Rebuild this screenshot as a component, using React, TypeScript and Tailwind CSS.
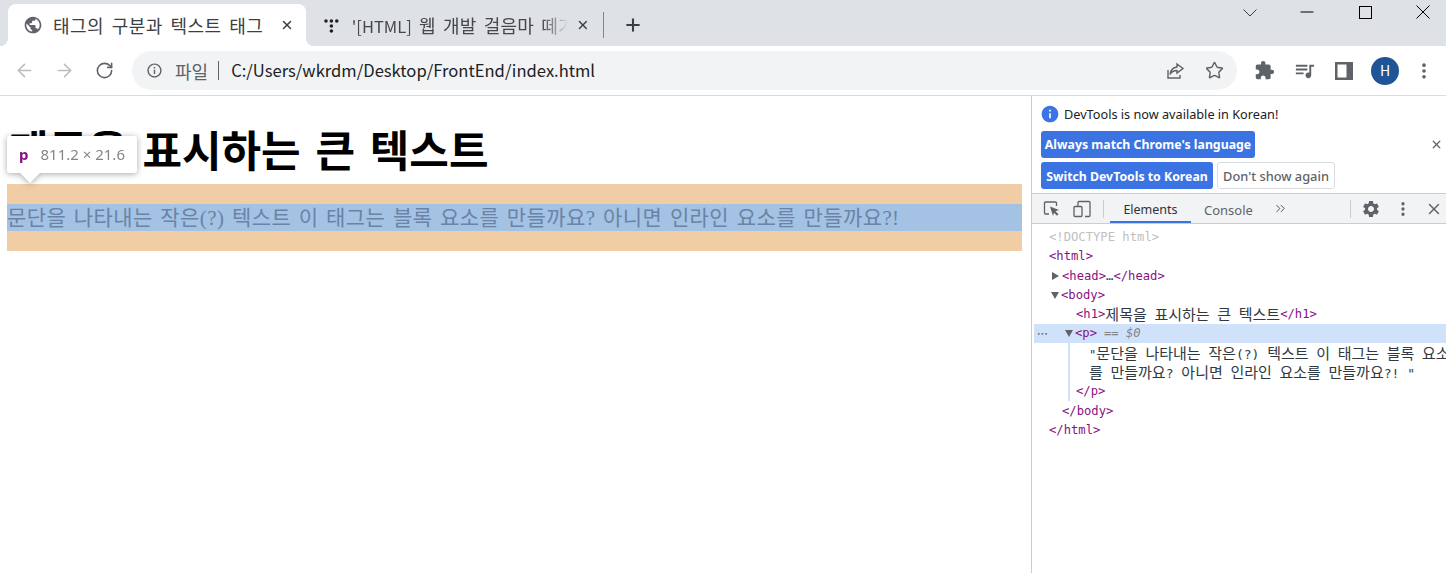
import { ArrowLeft, ArrowRight, ChevronsRight, MoreVertical, Plus, RotateCw, Star, X } from "lucide-react";
import { MdExtension, MdInfo, MdInfoOutline, MdPublic, MdQueueMusic, MdSettings } from "react-icons/md";

const UI = "font-['Noto_Sans','Noto_Sans_CJK_KR',sans-serif]";
const MONO = "font-['DejaVu_Sans_Mono','Noto_Sans_CJK_KR',monospace]";

function Ko({ children }: { children: string }) {
    return <span className="text-[15px] [word-spacing:4.300px] font-['Noto_Sans_CJK_KR',sans-serif]">{children}</span>;
}

function Tag({ children }: { children: string }) {
    return <span className="text-[#881280]">{children}</span>;
}

function ShareIcon() {
    return (
        <svg width="20" height="20" viewBox="0 0 20 20" fill="none" stroke="#5f6368" strokeWidth="1.4">
            <path d="M3 9v8h12v-3" />
            <path d="M12 3l6 4.500-6 4.500V9.500c-3 0-5.500 1-7 4 .5-4 3-7 7-7.500z" />
        </svg>
    );
}

function SidePanelIcon() {
    return (
        <svg width="18" height="18" viewBox="0 0 18 18">
            <path fillRule="evenodd" d="M0 0h18v18H0z M2.500 2.500v13h9v-13z" fill="#5f6368" />
        </svg>
    );
}

function InspectIcon() {
    return (
        <svg width="17" height="17" viewBox="0 0 17 17" fill="none">
            <path d="M6 14H2.500a1 1 0 0 1-1-1V3a1 1 0 0 1 1-1h10a1 1 0 0 1 1 1v3" stroke="#5f6368" strokeWidth="1.300" />
            <path d="M7 6.500l9 3.500-3.500 1.300 3 3-1.500 1.500-3-3L10 16z" fill="#5f6368" />
        </svg>
    );
}

function DeviceIcon() {
    return (
        <svg width="18" height="18" viewBox="0 0 18 18" fill="none" stroke="#5f6368" strokeWidth="1.300">
            <path d="M5 6V2.500a1 1 0 0 1 1-1h10a1 1 0 0 1 1 1v13a1 1 0 0 1-1 1h-4" />
            <rect x="1" y="6.500" width="8" height="10" rx="1" />
        </svg>
    );
}

function WindowControls() {
    return (
        <div className="mb-auto ml-auto flex h-[24px] items-center">
            <svg width="14" height="8" viewBox="0 0 14 8" fill="none" stroke="#3c4043" className="mt-[1px]">
                <path d="M.5.5L7 7l6.500-6.500" />
            </svg>
            <svg width="14" height="14" viewBox="0 0 14 14" fill="none" stroke="#000" className="ml-[43px]">
                <path d="M.5 7h13" />
            </svg>
            <div className="ml-[45px] h-[13px] w-[13px] border border-black" />
            <svg width="14" height="14" viewBox="0 0 14 14" fill="none" stroke="#000" className="ml-[44px] mr-[16px]">
                <path d="M.5.5l13 13M13.500.5l-13 13" />
            </svg>
        </div>
    );
}

function TabStrip() {
    return (
        <div className="flex h-[46px] shrink-0 items-end bg-[#dee1e6] pl-2">
            <div className="relative flex h-[42px] w-[298px] items-center rounded-t-lg bg-white pl-[15px] before:absolute before:bottom-0 before:-left-2 before:h-2 before:w-2 before:bg-[radial-gradient(circle_at_0_0,transparent_8px,white_8px)] after:absolute after:bottom-0 after:-right-2 after:h-2 after:w-2 after:bg-[radial-gradient(circle_at_100%_0,transparent_8px,white_8px)]">
                <MdPublic size={20} color="#5f6368" />
                <span className="ml-[10px] text-[18px] leading-[24px] tracking-[0.5px] [word-spacing:3px] text-[#3c4043]">태그의 구분과 텍스트 태그</span>
                <X size={14} strokeWidth={2.500} color="#3c4043" className="ml-auto mr-[12px]" />
            </div>
            <div className="flex h-[42px] w-[298px] items-center pl-[18px]">
                <svg width="15" height="15" viewBox="0 0 15 15" fill="#202124">
                    <circle cx="2" cy="3" r="1.800" />
                    <circle cx="7.500" cy="3" r="1.800" />
                    <circle cx="13" cy="3" r="1.800" />
                    <circle cx="7.500" cy="8" r="1.800" />
                    <circle cx="7.500" cy="13" r="1.800" />
                </svg>
                <span className="ml-[13px] w-[220px] overflow-hidden whitespace-nowrap text-[18px] leading-[24px] tracking-[0.2px] [word-spacing:3px] text-[#45474a] [mask-image:linear-gradient(to_right,black_88%,transparent)]">
                    <span className="text-[16.500px] tracking-normal">'[HTML]</span> 웹 개발 걸음마 떼기
                </span>
                <X size={14} strokeWidth={2.500} color="#3c4043" className="ml-[8px]" />
                <div className="ml-[13px] h-[26px] w-px bg-[#80868b]" />
            </div>
            <div className="flex h-[42px] items-center pl-[19px]">
                <Plus size={20} strokeWidth={2.500} color="#3c4043" />
            </div>
            <WindowControls />
        </div>
    );
}

function Toolbar() {
    return (
        <div className="flex h-[50px] shrink-0 items-center border-b border-[#d9dbde] bg-white pl-[14px]">
            <ArrowLeft size={21} strokeWidth={1.700} color="#b9bcc0" />
            <ArrowRight size={21} strokeWidth={1.700} color="#b9bcc0" className="ml-[19px]" />
            <RotateCw size={19} strokeWidth={2} color="#5f6368" className="ml-[20px]" />
            <div className="ml-[18px] flex h-[39px] w-[1105px] items-center rounded-full bg-[#f1f3f4] pl-[14px]">
                <MdInfoOutline size={17} color="#5f6368" />
                <span className="ml-[12px] text-[18px] leading-[24px] text-[#5f6368]">파일</span>
                <div className="ml-[10px] h-[19px] w-px bg-[#5f6368]" />
                <span className="ml-[12px] text-[16.600px] text-[#202124]">C:/Users/wkrdm/Desktop/FrontEnd/index.html</span>
                <div className="ml-auto" />
                <ShareIcon />
                <Star size={19} strokeWidth={1.800} color="#5f6368" className="ml-[20px] mr-[13px]" />
            </div>
            <MdExtension size={21} color="#5f6368" className="ml-[17px]" />
            <MdQueueMusic size={23} color="#5f6368" className="ml-[18px]" />
            <div className="ml-[19px]"><SidePanelIcon /></div>
            <div className="ml-[18px] flex h-[28px] w-[28px] items-center justify-center rounded-full bg-[#1f5597] text-[14px] text-white">H</div>
            <MoreVertical size={20} strokeWidth={2.400} color="#5f6368" className="ml-[15px]" />
        </div>
    );
}

function PagePane() {
    return (
        <div className="relative w-[1031px] shrink-0 bg-white px-[7px] font-['Liberation_Serif','Noto_Sans_CJK_KR',serif]">
            <h1 className="pl-[2px] pt-[23px] font-['Noto_Sans_CJK_KR',sans-serif] text-[43px] font-bold leading-[58px] [word-spacing:5px] whitespace-nowrap text-black">제목을 표시하는 큰 텍스트</h1>
            <div className="mt-[7px] h-[67px] w-[1015px] bg-[#f0cda5] py-[20px]">
                <p className="h-[27px] bg-[#a4c2e3] pt-[1px] text-[21px] leading-[27px] tracking-[0.4px] [word-spacing:2px] whitespace-nowrap text-[#6a83a6]">
                    문단을 나타내는 작은(?) 텍스트 이 태그는 블록 요소를 만들까요? 아니면 인라인 요소를 만들까요?!
                </p>
            </div>
            <div className={`absolute left-[7px] top-[40px] flex h-[37px] w-[130px] items-center rounded-[3px] bg-white pl-[12px] [filter:drop-shadow(0_1px_3px_rgba(0,0,0,0.35))] ${UI}`}>
                <span className="text-[15px] font-bold text-[#881280]">p</span>
                <span className="ml-[12px] text-[15px] text-[#80868b]">811.2 × 21.6</span>
                <div className="absolute left-[13px] top-[37px] h-0 w-0 border-x-[10px] border-t-[10px] border-x-transparent border-t-white" />
            </div>
        </div>
    );
}

function Infobar() {
    return (
        <div className={`relative h-[97px] shrink-0 pl-[9px] pt-[8px] text-[12.700px] whitespace-nowrap ${UI}`}>
            <div className="flex h-[20px] items-center">
                <MdInfo size={20} color="#3d74e3" className="-ml-[1px]" />
                <span className="ml-[4px] pt-[1px] text-[#202124]">DevTools is now available in Korean!</span>
            </div>
            <div className="mt-[7px] flex">
                <div className="flex h-[27px] w-[214px] items-center justify-center rounded-[3px] bg-[#3b74e2] pt-[1px] text-[12.300px] font-bold text-white">Always match Chrome's language</div>
            </div>
            <div className="mt-[4px] flex gap-[4px]">
                <div className="flex h-[27px] w-[172px] items-center justify-center rounded-[3px] bg-[#3b74e2] pt-[3px] text-[12.300px] font-bold text-white">Switch DevTools to Korean</div>
                <div className="flex h-[27px] w-[118px] items-center justify-center rounded-[3px] border border-[#dadce0] pt-[3px] text-[12.800px] font-medium text-[#5f6368]">Don't show again</div>
            </div>
            <X size={13} strokeWidth={2.400} color="#5f6368" className="absolute right-[3px] top-[42px]" />
        </div>
    );
}

function DevToolsTabs() {
    return (
        <div className={`flex h-[31px] shrink-0 items-center border-y border-[#cbcdd1] bg-[#f1f3f4] text-[13px] text-[#5f6368] ${UI}`}>
            <div className="ml-[11px]"><InspectIcon /></div>
            <div className="ml-[13px]"><DeviceIcon /></div>
            <div className="ml-[12px] h-[18px] w-px bg-[#ccc]" />
            <div className="ml-[6px] flex h-full w-[81px] items-center justify-center border-b-2 border-[#3b74e2] pt-[6px] text-[12.500px] text-[#303134]">Elements</div>
            <div className="ml-[13px] pt-[4px]">Console</div>
            <ChevronsRight size={15} strokeWidth={1.400} className="ml-[20px]" color="#3c4043" />
            <div className="ml-[62px] h-[18px] w-px bg-[#ccc]" />
            <MdSettings size={20} className="ml-[10px]" />
            <MoreVertical size={18} strokeWidth={2.400} className="ml-[13px]" />
            <X size={18} strokeWidth={2} className="ml-[13px]" />
        </div>
    );
}

function Row({ indent, selected, children }: { indent: number; selected?: boolean; children: React.ReactNode }) {
    return (
        <div className={`flex h-[19.300px] items-center whitespace-pre ${selected ? "bg-[#cfe2f9]" : ""}`} style={{ paddingLeft: indent }}>
            {children}
        </div>
    );
}

function Arrow({ open }: { open?: boolean }) {
    return open ? (
        <div className="mr-[2px] h-0 w-0 border-x-[4.500px] border-t-[7px] border-x-transparent border-t-[#5f6368]" />
    ) : (
        <div className="mr-[3px] h-0 w-0 border-y-[4.500px] border-l-[7px] border-y-transparent border-l-[#5f6368]" />
    );
}

function ElementsTree() {
    return (
        <div className={`flex-1 overflow-hidden pl-[2px] pt-[3.500px] text-[12.200px] text-[#303942] ${MONO}`}>
            <Row indent={15}><span className="text-[#c0c0c0]">{"<!DOCTYPE html>"}</span></Row>
            <Row indent={15}><Tag>{"<html>"}</Tag></Row>
            <Row indent={18}><Arrow /><Tag>{"<head>"}</Tag>…<Tag>{"</head>"}</Tag></Row>
            <Row indent={17}><Arrow open /><Tag>{"<body>"}</Tag></Row>
            <Row indent={42}><Tag>{"<h1>"}</Tag><Ko>제목을 표시하는 큰 텍스트</Ko><Tag>{"</h1>"}</Tag></Row>
            <Row indent={0} selected>
                <span className="ml-[3px] mr-[17px] w-[11px] text-[6px] text-[#5f6368]">•••</span>
                <Arrow open />
                <Tag>{"<p>"}</Tag>
                <span className="ml-[7px] italic text-[#80868b]">== $0</span>
            </Row>
            <div className="ml-[34px] w-[2px] border-l-2 border-[#cfe2f9]">
                <div className="w-[400px]">
                    <Row indent={19}><span>"<Ko>문단을 나타내는 작은</Ko><span className="text-[13px]">(?) </span><Ko>텍스트 이 태그는 블록 요소</Ko></span></Row>
                    <Row indent={19}><span><Ko>를 만들까요</Ko><span className="text-[13px]">? </span><Ko>아니면 인라인 요소를 만들까요</Ko><span className="text-[13px]">?! "</span></span></Row>
                    <Row indent={6}><Tag>{"</p>"}</Tag></Row>
                </div>
            </div>
            <Row indent={28}><Tag>{"</body>"}</Tag></Row>
            <Row indent={15}><Tag>{"</html>"}</Tag></Row>
        </div>
    );
}

export default function App() {
    return (
        <div className="flex h-[573px] w-[1446px] flex-col overflow-hidden bg-white font-['Noto_Sans_CJK_KR',sans-serif]">
            <TabStrip />
            <Toolbar />
            <div className="flex min-h-0 flex-1">
                <PagePane />
                <div className="flex min-w-0 flex-1 flex-col border-l border-[#cbcdd1]">
                    <Infobar />
                    <DevToolsTabs />
                    <ElementsTree />
                </div>
            </div>
        </div>
    );
}
